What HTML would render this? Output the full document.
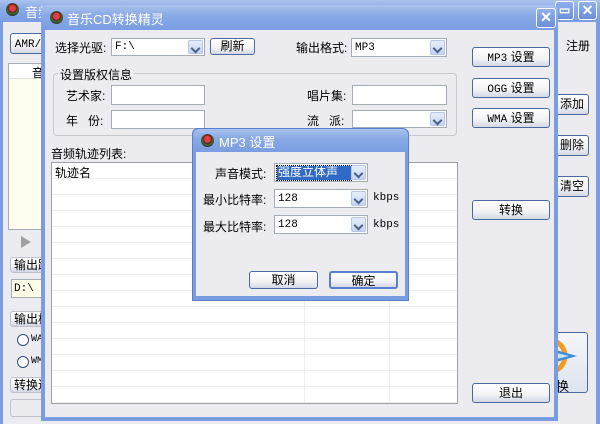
<!DOCTYPE html>
<html><head><meta charset="utf-8">
<style>
*{margin:0;padding:0;box-sizing:border-box}
body{width:600px;height:424px;overflow:hidden;background:#ECEBF0;position:relative;font-family:"Liberation Sans","Noto Sans CJK SC",sans-serif;font-size:12px;color:#000}
.a{position:absolute}
.title{background:linear-gradient(#A9C3EE,#8AAAE6 40%,#7A9DE2);}
.btn{position:absolute;border:1px solid #4A6A9E;border-radius:3px;background:linear-gradient(#FFFFFF,#F2F2F5 60%,#D4D8E4);text-align:center;font-size:12px;line-height:17px;white-space:nowrap;overflow:hidden}
.inp{position:absolute;background:#fff;border:1px solid #A5ACB5}
.dd{position:absolute;right:1px;top:1px;bottom:1px;width:15px;border:1px solid #B5C7E8;border-radius:2px;background:linear-gradient(#E6EEFC,#C4D4F2)}
.dd:after{content:"";position:absolute;left:3px;top:4px;width:5px;height:5px;border-right:2px solid #4D6185;border-bottom:2px solid #4D6185;transform:rotate(45deg)}
.mono{font-family:"Liberation Mono",monospace;font-size:11px}
.ico{position:absolute;width:13px;height:13px;border-radius:50%;background:radial-gradient(circle at 50% 40%,#E04040 0 3px,#6A2020 4px,#2E7A2E 6px,#333 7px)}
.xb{position:absolute;width:19px;height:19px;border:1px solid #fff;border-radius:3px;background:linear-gradient(#8FB0EC,#6A90DA);color:#fff;font-weight:bold;font-size:14px;line-height:16px;text-align:center}
</style></head><body>

<!-- back window -->
<div class="a title" style="left:0;top:0;width:600px;height:22px"></div>
<div class="ico" style="left:6px;top:3px"></div>
<div class="a" style="left:25px;top:2px;color:#fff;font-size:13px">音频</div>
<div class="xb" style="left:555px;top:1px;font-size:12px">▭</div>
<div class="xb" style="left:578px;top:1px">✕</div>
<div class="a" style="left:0;top:22px;width:3px;height:402px;background:#7A9DE2"></div>
<div class="a" style="left:596px;top:22px;width:4px;height:402px;background:#7A9DE2"></div>
<div class="btn" style="left:10px;top:33px;width:36px;height:21px;line-height:19px" ><span class="mono">AMR/</span></div>
<div class="a" style="left:8px;top:63px;width:36px;height:167px;background:#FFFDF0;border:1px solid #A5ACB5"></div>
<div class="a" style="left:9px;top:64px;width:34px;height:15px;background:#fff;border-bottom:1px solid #ddd"></div>
<div class="a" style="left:32px;top:64px">音</div>
<div class="a" style="left:21px;top:236px;width:0;height:0;border-left:10px solid #A0A0A0;border-top:6px solid transparent;border-bottom:6px solid transparent"></div>
<div class="btn" style="left:10px;top:257px;width:34px;height:16px;border-color:#C0C0C8;line-height:14px;text-align:left;padding-left:3px">输出路</div>
<div class="a mono" style="left:11px;top:279px;width:33px;height:19px;background:#FFFDE8;border:1px solid #A5ACB5;padding:3px 2px">D:\</div>
<div class="btn" style="left:10px;top:311px;width:34px;height:16px;border-color:#C0C0C8;line-height:14px;text-align:left;padding-left:3px">输出格</div>
<div class="a" style="left:17px;top:334px;width:12px;height:12px;border-radius:50%;border:1px solid #2F4F7F;background:#fff"></div>
<div class="a mono" style="left:31px;top:334px;font-size:10px">WA</div>
<div class="a" style="left:17px;top:356px;width:12px;height:12px;border-radius:50%;border:1px solid #2F4F7F;background:#fff"></div>
<div class="a mono" style="left:31px;top:356px;font-size:10px">WM</div>
<div class="btn" style="left:10px;top:377px;width:34px;height:16px;border-color:#C0C0C8;line-height:14px;text-align:left;padding-left:3px">转换进</div>
<div class="a" style="left:10px;top:399px;width:34px;height:18px;border:1px solid #C0C0C8;border-radius:3px;background:#ECEBF0"></div>
<div class="a" style="left:566px;top:37px">注册</div>
<div class="btn" style="left:545px;top:94px;width:44px;height:21px;line-height:19px;text-align:right;padding-right:4px">添加</div>
<div class="btn" style="left:545px;top:135px;width:44px;height:21px;line-height:19px;text-align:right;padding-right:4px">删除</div>
<div class="btn" style="left:545px;top:176px;width:44px;height:21px;line-height:19px;text-align:right;padding-right:4px">清空</div>
<div class="a" style="left:545px;top:332px;width:43px;height:61px;border:1px solid #4A6A9E;border-radius:3px;background:linear-gradient(#F4F6FA,#DDE3EE)"></div>
<svg class="a" style="left:545px;top:336px" width="43" height="40"><circle cx="4" cy="20" r="16" fill="none" stroke="#F29A22" stroke-width="5"/><path d="M-10 8 L32 20 L-10 32 Z" fill="#3E8CD8"/><path d="M0 14 L24 20 L0 26Z" fill="#BFE6FA"/></svg>
<div class="a" style="left:556px;top:376px;font-size:13px">换</div>

<!-- main window -->
<div class="a" style="left:41px;top:5px;width:517px;height:416px;background:#7A9DE2;border-radius:6px 6px 0 0"></div>
<div class="a title" style="left:41px;top:5px;width:517px;height:25px;border-radius:6px 6px 0 0"></div>
<div class="ico" style="left:50px;top:11px"></div>
<div class="a" style="left:67px;top:9px;color:#fff;font-size:13px">音乐CD转换精灵</div>
<div class="xb" style="left:536px;top:8px;width:20px;height:20px">✕</div>
<div class="a" style="left:45px;top:30px;width:509px;height:387px;background:#ECEBF0"></div>

<div class="a" style="left:55px;top:39px">选择光驱:</div>
<div class="inp" style="left:111px;top:38px;width:94px;height:18px"><span class="a mono" style="left:3px;top:2px">F:\</span><div class="dd"></div></div>
<div class="btn" style="left:210px;top:38px;width:45px;height:17px;line-height:15px">刷新</div>
<div class="a" style="left:296px;top:39px">输出格式:</div>
<div class="inp" style="left:351px;top:38px;width:96px;height:19px"><span class="a mono" style="left:3px;top:3px">MP3</span><div class="dd"></div></div>

<div class="a" style="left:53px;top:73px;width:404px;height:63px;border:1px solid #C8C8CC;border-radius:4px"></div>
<div class="a" style="left:58px;top:66px;background:#ECEBF0;padding:0 2px">设置版权信息</div>
<div class="a" style="left:66px;top:87px">艺术家:</div>
<div class="inp" style="left:111px;top:85px;width:94px;height:20px"></div>
<div class="a" style="left:66px;top:112px">年&nbsp;&nbsp;&nbsp;份:</div>
<div class="inp" style="left:111px;top:110px;width:94px;height:19px"></div>
<div class="a" style="left:307px;top:87px">唱片集:</div>
<div class="inp" style="left:352px;top:85px;width:95px;height:20px"></div>
<div class="a" style="left:307px;top:112px">流&nbsp;&nbsp;&nbsp;派:</div>
<div class="inp" style="left:352px;top:110px;width:95px;height:18px"><div class="dd"></div></div>

<div class="btn" style="left:472px;top:47px;width:78px;height:20px;line-height:18px"><span class="mono">MP3</span> 设置</div>
<div class="btn" style="left:472px;top:78px;width:78px;height:20px;line-height:18px"><span class="mono">OGG</span> 设置</div>
<div class="btn" style="left:472px;top:108px;width:78px;height:20px;line-height:18px"><span class="mono">WMA</span> 设置</div>
<div class="btn" style="left:472px;top:200px;width:78px;height:20px;line-height:18px">转换</div>
<div class="btn" style="left:472px;top:383px;width:78px;height:20px;line-height:18px">退出</div>

<div class="a" style="left:51px;top:145px">音频轨迹列表:</div>
<div class="a" style="left:51px;top:162px;width:407px;height:242px;background:#fff;border:1px solid #A0A0A0;background-image:repeating-linear-gradient(#fff 0 15px,#EFEFEF 15px 16px);background-position:0 0"></div>
<div class="a" style="left:304px;top:178px;width:1px;height:225px;background:#EFEFEF"></div>
<div class="a" style="left:389px;top:178px;width:1px;height:225px;background:#EFEFEF"></div>
<div class="a" style="left:55px;top:164px">轨迹名</div>

<!-- MP3 dialog -->
<div class="a" style="left:192px;top:128px;width:217px;height:173px;background:#7A9DE2;border-radius:6px 6px 0 0;border:1px solid #5A7FCC"></div>
<div class="a title" style="left:193px;top:129px;width:215px;height:23px;border-radius:6px 6px 0 0"></div>
<div class="ico" style="left:201px;top:134px"></div>
<div class="a" style="left:219px;top:132px;color:#fff;font-size:13px">MP3 设置</div>
<div class="a" style="left:196px;top:152px;width:209px;height:144px;background:#ECEBF0"></div>
<div class="a" style="left:215px;top:165px">声音模式:</div>
<div class="inp" style="left:274px;top:163px;width:94px;height:19px"><span class="a" style="left:2px;top:2px;width:74px;height:14px;background:#316AC5;color:#fff;line-height:13px;padding-left:1px;outline:1px dotted #000">强度立体声</span><div class="dd"></div></div>
<div class="a" style="left:203px;top:191px">最小比特率:</div>
<div class="inp" style="left:274px;top:189px;width:94px;height:19px"><span class="a mono" style="left:3px;top:3px">128</span><div class="dd"></div></div>
<div class="a mono" style="left:373px;top:192px">kbps</div>
<div class="a" style="left:203px;top:218px">最大比特率:</div>
<div class="inp" style="left:274px;top:215px;width:94px;height:19px"><span class="a mono" style="left:3px;top:3px">128</span><div class="dd"></div></div>
<div class="a mono" style="left:373px;top:219px">kbps</div>
<div class="btn" style="left:249px;top:271px;width:69px;height:18px;line-height:16px">取消</div>
<div class="btn" style="left:329px;top:271px;width:69px;height:18px;line-height:16px;border:2px solid #5A7FCC">确定</div>
</body></html>
